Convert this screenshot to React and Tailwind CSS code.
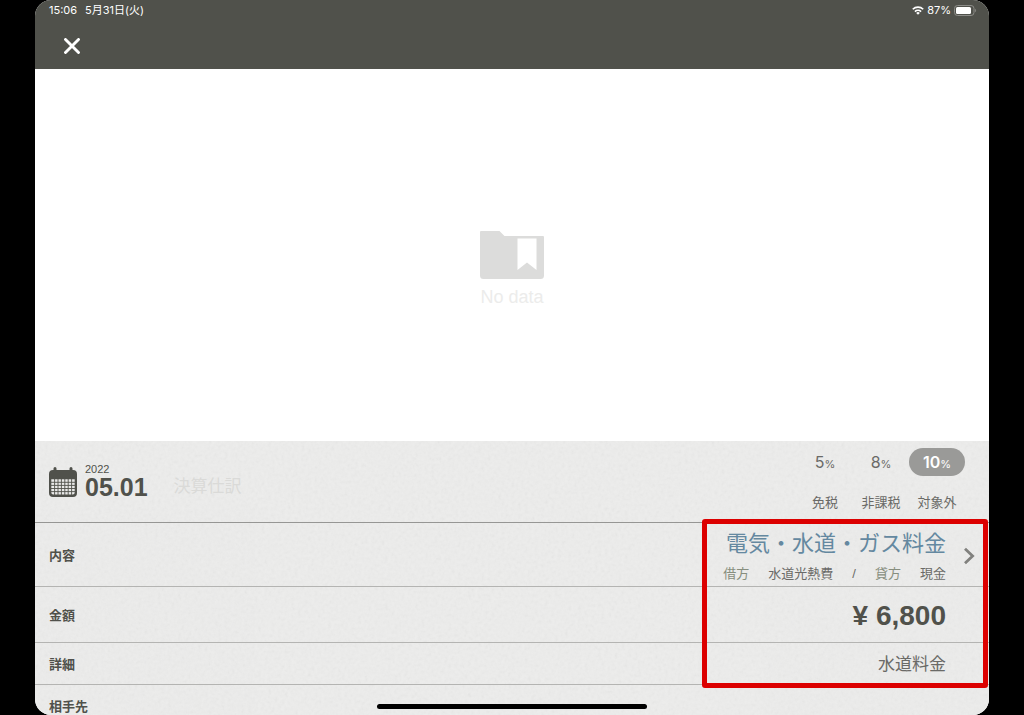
import React, { useState } from "react";

const TAX_OPTIONS = [
  { id: "tax5", label: "5", percent: true },
  { id: "tax8", label: "8", percent: true },
  { id: "tax10", label: "10", percent: true },
  { id: "exempt", label: "免税" },
  { id: "nontaxable", label: "非課税" },
  { id: "outside", label: "対象外" },
];

const WifiIcon = () => (
  <svg viewBox="0 0 24 18" className="w-3 h-[9px]" aria-hidden="true">
    <g fill="none" stroke="currentColor" strokeWidth="3.2">
      <path d="M1.5 6.6a15 15 0 0 1 21 0" />
      <path d="M5.8 11.2a9 9 0 0 1 12.4 0" />
    </g>
    <path d="M12 17.5 8.4 13.9a5.2 5.2 0 0 1 7.2 0z" fill="currentColor" />
  </svg>
);

const BatteryIcon = () => (
  <svg viewBox="0 0 23 11" className="w-[23px] h-[11px]" aria-hidden="true">
    <rect
      x="0.5"
      y="0.5"
      width="19.5"
      height="10"
      rx="3"
      fill="none"
      stroke="#8c8c88"
    />
    <rect x="2" y="2" width="15" height="7" rx="1.5" fill="#fff" />
    <path d="M21.2 3.8c1.2.4 1.2 3 0 3.4z" fill="#8c8c88" />
  </svg>
);

const CloseIcon = () => (
  <svg viewBox="0 0 16 16" className="w-4 h-4" aria-hidden="true">
    <path
      d="M1.5 1.500l13 13M14.500 1.500l-13 13"
      stroke="currentColor"
      strokeWidth="2.9"
      strokeLinecap="round"
    />
  </svg>
);

const FolderIcon = () => (
  <svg viewBox="0 0 64 48" className="w-16 h-12" aria-hidden="true">
    <path
      d="M0 1a1 1 0 0 1 1-1h18.5l5 5H63a1 1 0 0 1 1 1v38.500a3.500 3.500 0 0 1-3.500 3.500h-57A3.500 3.500 0 0 1 0 44.500z"
      fill="#dcdcdb"
    />
    <path d="M37.500 7.500h19V39L47 31.500 37.500 39z" fill="#fff" />
  </svg>
);

const CalendarIcon = () => (
  <svg viewBox="0 0 28 30" className="w-7 h-[30px]" aria-hidden="true">
    <path
      d="M4.500 1.500a1.500 1.500 0 0 1 3 0V3h13V1.500a1.500 1.500 0 0 1 3 0V3h.5a4 4 0 0 1 4 4v19a4 4 0 0 1-4 4H4a4 4 0 0 1-4-4V7a4 4 0 0 1 4-4h.5z"
      fill="#50514b"
    />
    <path
      d="M2.300 12.300h23.400V25.500a2 2 0 0 1-2 2H4.300a2 2 0 0 1-2-2z"
      fill="#e9e9e8"
    />
    <path
      d="M2 15.300h24M2 18.400h24M2 21.500h24M2 24.600h24M5.600 12v16M9 12v16M12.400 12v16M15.800 12v16M19.200 12v16M22.600 12v16"
      stroke="#50514b"
      strokeWidth="0.9"
    />
  </svg>
);

const ChevronIcon = () => (
  <svg viewBox="0 0 12 18" className="w-3 h-[18px]" aria-hidden="true">
    <path
      d="M2 1.800 9.600 9 2 16.200"
      fill="none"
      stroke="#81817e"
      strokeWidth="2.8"
    />
  </svg>
);

// paper grain behind the form rows
const PaperTexture = () => (
  <svg
    className="absolute inset-0 w-full h-full opacity-10 pointer-events-none"
    aria-hidden="true"
  >
    <filter id="paper">
      <feTurbulence type="fractalNoise" baseFrequency="0.3" numOctaves="2" />
      <feColorMatrix type="saturate" values="0" />
    </filter>
    <rect width="100%" height="100%" filter="url(#paper)" />
  </svg>
);

const App = () => {
  const [tax, setTax] = useState("tax10");
  const [amount, setAmount] = useState("¥ 6,800");
  const [detail, setDetail] = useState("水道料金");

  return (
    <div className="h-screen bg-black px-[35px] font-['Liberation_Sans','Noto_Sans_CJK_JP',sans-serif] text-[#50514b]">
      <div className="relative h-full flex flex-col overflow-hidden rounded-[16px] bg-white">
        {/* ── HEADER ── */}
        <header className="shrink-0 bg-[#50514b] text-white pl-3.5 pr-3 pb-2">
          <div className="flex items-center justify-between h-5 text-[11px] font-['Inter','Noto_Sans_CJK_JP',sans-serif]">
            <div className="flex gap-2">
              <span>15:06</span>
              <span>5月31日(火)</span>
            </div>
            <div className="flex items-center gap-[3px]">
              <WifiIcon />
              <span>87%</span>
              <BatteryIcon />
            </div>
          </div>
          <button
            aria-label="閉じる"
            className="mt-[11px] ml-2 w-[30px] h-[30px] flex items-center justify-center"
          >
            <CloseIcon />
          </button>
        </header>

        {/* ── EMPTY PREVIEW ── */}
        <main className="flex-1 flex flex-col items-center justify-center gap-2 pt-7">
          <FolderIcon />
          <p className="text-[18px] leading-5 text-[#ececeb]">No data</p>
        </main>

        {/* ── FORM ── */}
        <form className="relative shrink-0 bg-[#ededec]">
          <PaperTexture />

          <div className="relative flex items-start justify-between h-[82px] border-b border-[#969694] pl-3.5 pr-6 pt-[7px]">
            <div className="flex items-center pt-[13px]">
              <button type="button" className="flex items-end gap-2 text-left">
                <CalendarIcon />
                <span className="flex flex-col">
                  <span className="text-[11px] leading-4">2022</span>
                  <span className="text-[25px] leading-5 font-bold">05.01</span>
                </span>
              </button>
              <button
                type="button"
                className="ml-[26px] mt-4 text-[17px] leading-5 text-[#dadad8]"
              >
                決算仕訳
              </button>
            </div>

            <div className="grid grid-cols-[repeat(3,56px)] gap-y-[13px]">
              {TAX_OPTIONS.map((t) => (
                <label
                  key={t.id}
                  className={`relative h-7 rounded-full flex items-center justify-center cursor-pointer ${
                    tax === t.id ? "bg-[#9a9a98] text-white" : "text-[#6a6a67]"
                  }`}
                >
                  <input
                    type="radio"
                    name="tax"
                    value={t.id}
                    checked={tax === t.id}
                    onChange={() => setTax(t.id)}
                    className="sr-only"
                  />
                  {t.percent ? (
                    <span
                      className={`text-[16px] font-['Inter',sans-serif] ${
                        tax === t.id ? "font-semibold" : ""
                      }`}
                    >
                      {t.label}
                      <span className="text-[11px] font-normal">%</span>
                    </span>
                  ) : (
                    <span className="text-[13px]">{t.label}</span>
                  )}
                </label>
              ))}
            </div>
          </div>

          <div className="relative">
            <button
              type="button"
              className="w-full h-16 flex items-center border-b border-[#b4b4b2] px-3.5 pt-0.5"
            >
              <span className="text-[13px] font-bold">内容</span>
              <span className="ml-auto flex flex-col items-end gap-1">
                <span className="text-[22px] leading-8 text-[#6488a0]">
                  電気・水道・ガス料金
                </span>
                <span className="flex gap-[19px] text-[13px] leading-5 text-[#6a6a67]">
                  <span className="text-[#878e7e]">借方</span>
                  <span>水道光熱費</span>
                  <span>/</span>
                  <span className="text-[#878e7e]">貸方</span>
                  <span>現金</span>
                </span>
              </span>
              <span className="ml-[17px]">
                <ChevronIcon />
              </span>
            </button>

            <div className="h-14 flex items-center justify-between border-b border-[#b4b4b2] pl-3.5 pr-[43px] pt-0.5">
              <label htmlFor="amount" className="text-[13px] font-bold">
                金額
              </label>
              <input
                id="amount"
                value={amount}
                onChange={(e) => setAmount(e.target.value)}
                className="w-48 bg-transparent text-right text-[28px] leading-10 font-bold outline-none"
              />
            </div>

            <div className="h-[42px] flex items-center justify-between border-b border-[#b4b4b2] pl-3.5 pr-[43px] pt-0.5">
              <label htmlFor="detail" className="text-[13px] font-bold">
                詳細
              </label>
              <input
                id="detail"
                value={detail}
                onChange={(e) => setDetail(e.target.value)}
                className="w-48 bg-transparent text-right text-[17px] text-[#6a6a67] outline-none"
              />
            </div>

            {/* highlight frame over the entered values */}
            <div className="absolute -top-1 -bottom-[3px] right-px w-[286px] border-[5px] border-[#dc0000] rounded-[3px] pointer-events-none" />
          </div>

          <div className="relative h-[30px] pl-3.5 pt-3">
            <span className="block text-[13px] leading-5 font-bold">
              相手先
            </span>
          </div>
        </form>

        {/* home indicator */}
        <div className="absolute bottom-1.5 left-1/2 -translate-x-1/2 w-[270px] h-[5px] rounded-full bg-black" />
      </div>
    </div>
  );
};

export default App;
